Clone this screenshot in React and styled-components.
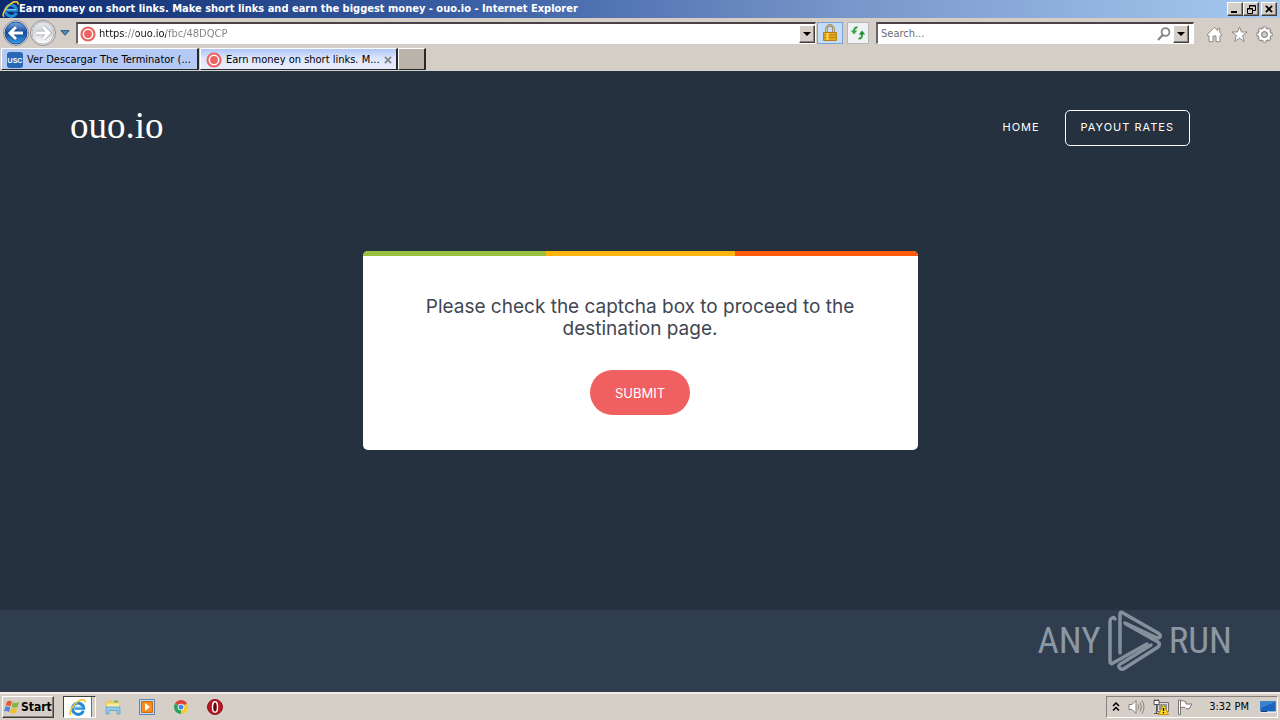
import React from "react";
import styled, { createGlobalStyle, css } from "styled-components";

const ui = '"DejaVu Sans Condensed", "DejaVu Sans", sans-serif';

const GlobalStyle = createGlobalStyle`
  * { box-sizing: border-box; }
  body { margin: 0; background: #25313e; }
  button, input { font: inherit; margin: 0; padding: 0; border: 0; border-radius: 0; }
  svg { display: block; flex: none; }
`;

const raised = css`
  background: #d5cfc8;
  border: 1px solid;
  border-color: #fff #404040 #404040 #fff;
  box-shadow: inset -1px -1px 0 #87827c;
`;

const Desktop = styled.div`
  min-height: 100vh;
  display: flex;
  flex-direction: column;
  font: 11px/14px ${ui};
  color: #000;
`;

const TitleBar = styled.header`
  height: 18px;
  display: flex;
  align-items: center;
  padding: 0 3px 0 2px;
  background: linear-gradient(to right, #0c2a6d, #3a5ea4 36%, #7796c9 66%, #a6caf0);
  color: #fff;
`;

const WindowTitle = styled.h1`
  flex: 1;
  min-width: 0;
  margin: 0;
  font: bold 11px/18px ${ui};
  white-space: nowrap;
  overflow: hidden;
`;

const WindowButton = styled.button`
  ${raised}
  width: 16px;
  height: 14px;
  display: grid;
  place-items: center;
  margin-left: ${(p) => (p.$apart ? "2px" : "0")};
`;

const NavBar = styled.div`
  height: 30px;
  display: flex;
  align-items: center;
  padding: 0 7px 0 2px;
  background: #d5cec7;
`;

const RoundButton = styled.button`
  background: none;
  width: 27px;
  height: 28px;
  display: grid;
  place-items: center;
`;

const HistoryButton = styled.button`
  background: none;
  width: 18px;
  height: 22px;
  margin-right: 2px;
  display: grid;
  place-items: center;
`;

const Field = styled.form`
  height: 22px;
  display: flex;
  align-items: center;
  min-width: 0;
  flex: ${(p) => p.$grow};
  background: #fff;
  border: 1px solid;
  border-width: 2px 1px 1px 2px;
  border-color: #4a4246 #fff #fff #6a6466;
  padding: ${(p) => (p.$search ? "0 4px 0 3px" : "0 0 0 2px")};
  margin-left: ${(p) => (p.$search ? "7px" : "0")};
  gap: ${(p) => (p.$search ? "2px" : "3px")};
`;

const TextBox = styled.input`
  flex: 1;
  min-width: 0;
  height: 18px;
  background: transparent;
  outline: none;
  color: #6d6d6d;
  &::placeholder { color: #6d6d6d; opacity: 1; }
`;

const AddressBox = styled(TextBox)`
  background: linear-gradient(
    to right,
    #111 27px, #808080 27px, #808080 37px,
    #111 37px, #111 67px, #808080 67px
  );
  -webkit-background-clip: text;
  background-clip: text;
  -webkit-text-fill-color: transparent;
`;

const DropButton = styled.button`
  ${raised}
  flex: none;
  width: 16px;
  height: 18px;
  display: grid;
  place-items: center;
`;

const ToolButton = styled.button`
  width: ${(p) => (p.$active ? "26px" : "22px")};
  height: 22px;
  display: grid;
  place-items: center;
  margin-left: ${(p) => (p.$active ? "1px" : "4px")};
  border: 1px solid ${(p) => (p.$active ? "#79a3d5" : "#b4b8be")};
  background: ${(p) => (p.$active ? "#c3dcf8" : "#eef2f2")};
`;

const Commands = styled.div`
  display: flex;
  gap: 8px;
  margin-left: 12px;
  padding-top: 2px;
`;

const IconButton = styled.button`
  background: none;
  width: 17px;
  height: 18px;
  display: grid;
  place-items: center;
`;

const TabStrip = styled.nav`
  height: 23px;
  display: flex;
  padding: 0 0 1px 1px;
  background: #d5cec7;
  border-bottom: 1px solid #d0d5cf;
`;

const Tab = styled.button`
  width: ${(p) => (p.$blank ? "28px" : "198px")};
  height: 22px;
  display: flex;
  align-items: center;
  gap: 4px;
  padding: 2px 5px 0;
  margin-right: ${(p) => (p.$active || p.$blank ? "0" : "1px")};
  border: 1px solid;
  border-color: #fff #29282a #29282a #fff;
  border-right-width: 2px;
  background: ${(p) =>
    p.$blank ? "#bab3aa" : p.$active ? "linear-gradient(#adc5f8, #dce5fc 45%, #e8edfb)" : "#b5c9f5"};
  white-space: nowrap;
  text-align: left;
`;

const TabLabel = styled.span`
  flex: 1;
`;

const Page = styled.main`
  flex: 1;
  display: flex;
  flex-direction: column;
  background: #25313e;
`;

const SiteHeader = styled.header`
  display: flex;
  align-items: center;
  justify-content: space-between;
  padding: 39px 90px 0 70px;
`;

const Brand = styled.a`
  font: 37px/32px "Liberation Serif", serif;
  padding-bottom: 4px;
  color: #fff;
  text-decoration: none;
`;

const SiteNav = styled.nav`
  display: flex;
  align-items: center;
  gap: 25px;
`;

const NavLink = styled.a`
  font: 11px/32px Inter, sans-serif;
  letter-spacing: 1px;
  color: #fff;
  text-decoration: none;
  border: 1px solid ${(p) => (p.$boxed ? "#fff" : "transparent")};
  border-width: ${(p) => (p.$boxed ? "1px" : "1px 0")};
  border-radius: 5px;
  padding: 0 ${(p) => (p.$boxed ? "15px" : "0")} 2px;
`;

const Card = styled.section`
  width: 555px;
  max-width: 90%;
  margin: 105px auto 160px;
  border-radius: 5px;
  overflow: hidden;
  background: #fff;
  text-align: center;
`;

const Stripe = styled.div`
  height: 5px;
  background: linear-gradient(to right, #98c03c 33%, #feb50e 33%, #feb50e 67%, #fc5b0d 67%);
`;

const CardBody = styled.form`
  display: flex;
  flex-direction: column;
  align-items: center;
  gap: 30px;
  padding: 40px 56px 35px;
`;

const Message = styled.p`
  margin: 0;
  font: 19px/22px Inter, sans-serif;
  color: #414752;
`;

const Submit = styled.button`
  width: 100px;
  height: 45px;
  border-radius: 23px;
  background: #f06060;
  color: #fff;
  font: 13px/20px Inter, sans-serif;
`;

const SiteFooter = styled.footer`
  height: 82px;
  display: flex;
  justify-content: flex-end;
  align-items: flex-start;
  padding-right: 48px;
  background: #2f3d4e;
`;

const Watermark = styled.div`
  display: flex;
  align-items: center;
  gap: 6px;
  height: 62px;
  font: 37px/62px "Roboto Condensed", "Liberation Sans", sans-serif;
  color: #8b97a2;
`;

const TaskBar = styled.footer`
  height: 28px;
  display: flex;
  align-items: center;
  padding: 0 2px;
  background: #d5cfc8;
  border-top: 2px solid #eeebe7;
`;

const StartButton = styled.button`
  ${raised}
  width: 52px;
  height: 22px;
  display: flex;
  align-items: center;
  gap: 1px;
  padding-left: 1px;
  font: bold 12px/18px ${ui};
`;

const Launchers = styled.div`
  flex: 1;
  display: flex;
  align-items: center;
  margin-left: 9px;
`;

const Launcher = styled.button`
  width: ${(p) => (p.$pressed ? "33px" : "34px")};
  height: 22px;
  display: grid;
  place-items: center;
  background: ${(p) => (p.$pressed ? "#fff" : "none")};
  padding-right: ${(p) => (p.$pressed ? "4px" : "0")};
  border: 1px solid transparent;
  border-color: ${(p) => (p.$pressed ? "#404040 #fff #fff #404040" : "transparent")};
  box-shadow: ${(p) => (p.$pressed ? "inset -3px 0 0 #d5cfc8, inset -4px 0 0 #77726c" : "none")};
`;

const Tray = styled.div`
  height: 22px;
  display: flex;
  align-items: center;
  gap: 8px;
  padding: 0 1px 0 5px;
  border: 1px solid;
  border-color: #87827c #fff #fff #87827c;
`;

const Clock = styled.time`
  padding: 0 3px 0 7px;
`;

const IeIcon = ({ size = 16 }) => (
  <svg width={size} height={size} viewBox="0 0 16 16" fill="none">
    <path d="M13.5 11A5.3 5.3 0 1 1 13.8 8.7H5" stroke="#248bd7" strokeWidth="2.8" />
    <path d="M4 8.2h9" stroke="#77cef8" strokeWidth="1" />
    <path d="M2 15C-.8 13 3.6 5.4 8.6 2.2 12-.1 15.8-.2 15 3.4" stroke="#f0c52f" strokeWidth="1.5" />
  </svg>
);

const Target = () => (
  <svg width="16" height="16" viewBox="0 0 16 16">
    <circle cx="8" cy="8" r="7.6" fill="#eb6363" />
    <circle cx="8" cy="8" r="4.7" fill="none" stroke="#fff" strokeWidth="1.5" />
  </svg>
);

const Arrow = ({ forward }) => (
  <svg width="26" height="26" viewBox="0 0 26 26">
    <defs>
      <linearGradient id={forward ? "fwd" : "back"} x1="0" y1="0" x2="0" y2="1">
        <stop offset="0" stopColor={forward ? "#e6e8eb" : "#79a9df"} />
        <stop offset=".48" stopColor={forward ? "#d3d6da" : "#164a9d"} />
        <stop offset="1" stopColor={forward ? "#fff" : "#39a1e8"} />
      </linearGradient>
    </defs>
    <circle cx="13" cy="13" r="12.5" fill="#eee" stroke="#8f8e91" />
    <circle cx="13" cy="13" r="11" fill={`url(#${forward ? "fwd" : "back"})`} stroke={forward ? "#b8babe" : "#1b519b"} />
    <path
      d={forward ? "M6 13h12M13 7l6 6-6 6" : "M20 13H8M13 7l-6 6 6 6"}
      fill="none" stroke={forward ? "#a5a8ac" : "#174b93"} strokeWidth="4.5"
    />
    <path
      d={forward ? "M6 13h12M13 7l6 6-6 6" : "M20 13H8M13 7l-6 6 6 6"}
      fill="none" stroke="#fff" strokeWidth="3"
    />
  </svg>
);

const Down = ({ blue }) => (
  <svg width="10" height="6" viewBox="0 0 10 6">
    {blue ? <path d="M1 .7h8L5 5.2z" fill="#5590c7" stroke="#20517f" /> : <path d="M1 1h8L5 5z" fill="#000" />}
  </svg>
);

const Lock = () => (
  <svg width="14" height="18" viewBox="0 0 14 18">
    <path d="M3.5 9V5a3.5 3.5 0 0 1 7 0v4" fill="none" stroke="#8a7849" strokeWidth="2.4" />
    <path d="M3.5 9V5a3.5 3.5 0 0 1 7 0v4" fill="none" stroke="#d9cb9c" strokeWidth="1" />
    <path d="M.5 8.5h13v8h-13z" fill="#e6a91e" stroke="#b58019" />
    <path d="M1 11h12M1 13.5h12" stroke="#bd8613" />
    <path d="M4.5 9v7" stroke="#ffdc54" strokeWidth="2" />
  </svg>
);

const Refresh = () => (
  <svg width="16" height="16" viewBox="0 0 16 16" fill="none" stroke="#2f9c3b" strokeWidth="2">
    <path d="M7.5 2.5C5 2 4 3.5 4 7" /><path d="M.8 5.5h6.4L4 9.4z" fill="#37a643" stroke="none" />
    <path d="M8.5 13.5c2.5.5 3.5-1 3.5-4.5" /><path d="M8.8 9.5h6.4L12 5.5z" fill="#218d32" stroke="none" />
  </svg>
);

const Magnifier = () => (
  <svg width="14" height="14" viewBox="0 0 14 14" fill="none" stroke="#858585" strokeWidth="1.8">
    <circle cx="8.5" cy="5" r="3.9" /><path d="M5.7 8 1 13" strokeWidth="2.2" />
  </svg>
);

const Home = () => (
  <svg width="17" height="17" viewBox="0 0 17 17" fill="#fff" stroke="#8c8985">
    <path d="M8.5 1.3 11.8 4.6V2.5h2v4.2l2.2 2.2-1.3 1.2-.7-.6v6.2H10V10H7v5.7H3V9.5l-.7.6L1 8.9z" />
  </svg>
);

const Star = () => (
  <svg width="17" height="17" viewBox="0 0 17 17" fill="#fff" stroke="#8c8985">
    <path d="m8.5 1 2 5h5.6l-4.5 3.5 1.7 6-4.8-3.4-4.8 3.4 1.7-6L.9 6h5.6z" />
  </svg>
);

const Gear = () => (
  <svg width="17" height="17" viewBox="0 0 17 17">
    {["#8c8985", "#fff"].map((c, i) => (
      <g key={c} stroke={c} fill="none">
        <circle cx="8.5" cy="8.5" r="4.6" strokeWidth={i ? 2.6 : 4.6} />
        <path
          d={i
            ? "M8.5 4.2V1.300M8.500 15.700v-3M4.200 8.500H1.300M15.700 8.500h-3M5.500 5.500 3.500 3.500M13.500 13.500l-2-2M5.500 11.500l-2 2M13.500 3.500l-2 2"
            : "M8.5 4.2V.4M8.5 16.6v-3.8M4.2 8.5H.4M16.6 8.5h-3.800M5.500 5.500 2.800 2.800M14.200 14.200l-2.700-2.700M5.500 11.500l-2.700 2.700M14.200 2.800l-2.700 2.700"}
          strokeWidth={i ? 2 : 3.8}
        />
      </g>
    ))}
    <circle cx="8.5" cy="8.5" r="2.7" fill="#d5cec7" stroke="#8c8985" />
  </svg>
);

const UscIcon = () => (
  <svg width="16" height="16" viewBox="0 0 16 16">
    <rect width="16" height="16" rx="3" fill="#2868b4" />
    <text x="8" y="11" fill="#fff" fontFamily="Liberation Sans, sans-serif" fontWeight="bold" fontSize="7" textAnchor="middle">USC</text>
  </svg>
);

const CloseMark = ({ color }) => (
  <svg width="8" height="8" viewBox="0 0 9 9"><path d="m1 1 7 7M8 1 1 8" stroke={color} strokeWidth="2" /></svg>
);

const WindowsFlag = () => (
  <svg width="16" height="16" viewBox="0 0 16 16">
    <path d="M3 2.5c2-1.2 3.5-.7 5 .3L6.5 7.5C5 6.5 3.500 6.300 1.600 7z" fill="#e75a2a" />
    <path d="M9 3.200c2 1 4 .8 6-.2L13.600 8c-2 1-4 .9-6 0z" fill="#83b83d" />
    <path d="M1.300 8c2-.8 3.500-.4 5 .5L5 13C3.500 12 2 11.800 0 12.500z" fill="#4b86d8" />
    <path d="M7.300 9c2 1 4 1 6 .1L12 13.800c-2 1-4 .8-6-.2z" fill="#f6bd2c" />
  </svg>
);

const FolderIcon = () => (
  <svg width="16" height="16" viewBox="0 0 16 16">
    <path d="M1 3.500 2 1.500h5l1 1.500h6v9H1z" fill="#e9cb61" />
    <path d="M2 4.500h12V9H2z" fill="#f8eaa0" /><path d="M9 1.500h4v2H9z" fill="#74ba5c" />
    <path d="M1 8h14v7h-3v-3.500H4V15H1z" fill="#8fc9ea" stroke="#5a9cc9" strokeWidth=".7" />
  </svg>
);

const PlayerIcon = () => (
  <svg width="16" height="16" viewBox="0 0 16 16">
    <path d="M.5.500h15v15H.500z" fill="#c0dcf7" stroke="#5a86bc" />
    <path d="M2.500 2.500h11v11h-11z" fill="#f38c1f" stroke="#cf6b10" /><path d="m6 4 5 4-5 4z" fill="#fff" />
  </svg>
);

const ChromeIcon = () => (
  <svg width="14" height="14" viewBox="0 0 14 14">
    <path d="M7 7 .94 3.500A7 7 0 0 1 13.060 3.500z" fill="#dc4437" />
    <path d="M7 7 13.060 3.500A7 7 0 0 1 7 14z" fill="#f7c92d" />
    <path d="M7 7v7A7 7 0 0 1 .94 3.500z" fill="#29a35a" />
    <circle cx="7" cy="7" r="3.300" fill="#fff" /><circle cx="7" cy="7" r="2.500" fill="#4684e8" />
  </svg>
);

const OperaIcon = () => (
  <svg width="16" height="16" viewBox="0 0 16 16">
    <circle cx="8" cy="8" r="7.500" fill="#bd1721" stroke="#851019" />
    <ellipse cx="8" cy="8" rx="2.500" ry="5.200" fill="#65080e" stroke="#fff" strokeWidth="1.400" />
  </svg>
);

const Speaker = () => (
  <svg width="17" height="16" viewBox="0 0 17 16" fill="none" stroke="#85817c">
    <path d="M1 5.500h3L8 1.500v13l-4-4H1z" fill="#fff" />
    <path d="M10 5.500q1.500 2.500 0 5M12 3.500q3 4.500 0 9M14 1.500q4 6.500 0 13" />
  </svg>
);

const NetworkIcon = () => (
  <svg width="16" height="16" viewBox="0 0 16 16">
    <path d="M4.500 3.500h11v9h-11z" fill="#dedede" stroke="#77736e" /><path d="M6 5h8v6H6z" fill="#8c99a5" />
    <path d="M1 1.500h5v4H1zM3.500 6v8" fill="#fff" stroke="#55514d" /><path d="M2 0v2M5 0v2M1 14.500h6" stroke="#55514d" />
    <path d="m10.500 5.500 5 10h-10z" fill="#ffd52f" stroke="#c79700" /><path d="M10.500 9v3M10.500 13v1.200" stroke="#000" strokeWidth="1.300" />
  </svg>
);

const FlagIcon = () => (
  <svg width="17" height="16" viewBox="0 0 17 16" fill="#fff" stroke="#77736e">
    <path d="M1.500 1h2v14.500h-2z" /><path d="M3.500 2q3-1 5.500 1v2h6l-3 5q-4 0-4-1.500-2-.8-4.500.500z" />
  </svg>
);

const DesktopIcon = () => (
  <svg width="16" height="16" viewBox="0 0 16 16">
    <path d="M.5 2.500h15v10H.500z" fill="#1965bb" stroke="#4584c4" />
    <path d="M1 3h14L1 9z" fill="#3b83cf" /><path d="M0 12.500h16V14H0z" fill="#e4edf6" /><path d="M1 12.500h6" stroke="#163d6e" />
  </svg>
);

const PlayMark = () => (
  <svg width="56" height="62" viewBox="0 0 56 62" fill="none" stroke="#84919c" strokeWidth="3.5" strokeLinejoin="round" strokeLinecap="round">
    <path d="M8 9Q7 7 5 8 3 9 3 12V51Q3 55 6 53L40 34" />
    <path d="M13 43V4Q13 1 16 3L51 23Q54 25 53 27 51 29 48 27L18 13" />
    <path d="M19 14 51 32Q54 34 51 37L18 58Q14 61 12 57 11 55 15 53L44 35" />
  </svg>
);

export default function App() {
  const stay = (e) => e.preventDefault();
  return (
    <Desktop>
      <GlobalStyle />
      <TitleBar>
        <IeIcon size={17} />
        <WindowTitle>Earn money on short links. Make short links and earn the biggest money - ouo.io - Internet Explorer</WindowTitle>
        <WindowButton aria-label="Minimize"><svg width="8" height="8"><path d="M0 7h6" stroke="#000" strokeWidth="2" /></svg></WindowButton>
        <WindowButton aria-label="Restore">
          <svg width="9" height="9" fill="none" stroke="#000"><path d="M2.500 3V.500h6v5H6M2 1h7M.500 3.500h5v5h-5zM0 4h6" /></svg>
        </WindowButton>
        <WindowButton $apart aria-label="Close"><CloseMark color="#000" /></WindowButton>
      </TitleBar>

      <NavBar>
        <RoundButton aria-label="Back"><Arrow /></RoundButton>
        <RoundButton aria-label="Forward"><Arrow forward /></RoundButton>
        <HistoryButton aria-label="Recent pages"><Down blue /></HistoryButton>
        <Field $grow={735} onSubmit={stay}>
          <Target />
          <AddressBox aria-label="Address" defaultValue="https://ouo.io/fbc/48DQCP" spellCheck={false} />
          <DropButton type="button" aria-label="Show addresses"><Down /></DropButton>
        </Field>
        <ToolButton $active aria-label="Security report"><Lock /></ToolButton>
        <ToolButton aria-label="Refresh"><Refresh /></ToolButton>
        <Field $search $grow={308} onSubmit={stay}>
          <TextBox aria-label="Search" placeholder="Search..." />
          <Magnifier />
          <DropButton type="button" aria-label="Search providers"><Down /></DropButton>
        </Field>
        <Commands>
          <IconButton aria-label="Home"><Home /></IconButton>
          <IconButton aria-label="Favorites"><Star /></IconButton>
          <IconButton aria-label="Tools"><Gear /></IconButton>
        </Commands>
      </NavBar>

      <TabStrip>
        <Tab><UscIcon /><TabLabel>Ver Descargar The Terminator (...</TabLabel></Tab>
        <Tab $active><Target /><TabLabel>Earn money on short links. M...</TabLabel><CloseMark color="#84868c" /></Tab>
        <Tab $blank aria-label="New tab" />
      </TabStrip>

      <Page>
        <SiteHeader>
          <Brand href="#">ouo.io</Brand>
          <SiteNav>
            <NavLink href="#">HOME</NavLink>
            <NavLink $boxed href="#">PAYOUT RATES</NavLink>
          </SiteNav>
        </SiteHeader>
        <Card>
          <Stripe />
          <CardBody onSubmit={stay}>
            <Message>Please check the captcha box to proceed to the destination page.</Message>
            <Submit>SUBMIT</Submit>
          </CardBody>
        </Card>
      </Page>
      <SiteFooter>
        <Watermark><span>ANY</span><PlayMark /><span>RUN</span></Watermark>
      </SiteFooter>

      <TaskBar>
        <StartButton><WindowsFlag />Start</StartButton>
        <Launchers>
          <Launcher $pressed aria-label="Internet Explorer"><IeIcon size={17} /></Launcher>
          <Launcher aria-label="Explorer"><FolderIcon /></Launcher>
          <Launcher aria-label="Media Player"><PlayerIcon /></Launcher>
          <Launcher aria-label="Chrome"><ChromeIcon /></Launcher>
          <Launcher aria-label="Opera"><OperaIcon /></Launcher>
        </Launchers>
        <Tray>
          <svg width="8" height="10" fill="none" stroke="#000" strokeWidth="1.500"><path d="m1 4 3-3 3 3M1 8.500l3-3 3 3" /></svg>
          <Speaker />
          <NetworkIcon />
          <FlagIcon />
          <Clock>3:32 PM</Clock>
          <DesktopIcon />
        </Tray>
      </TaskBar>
    </Desktop>
  );
}
